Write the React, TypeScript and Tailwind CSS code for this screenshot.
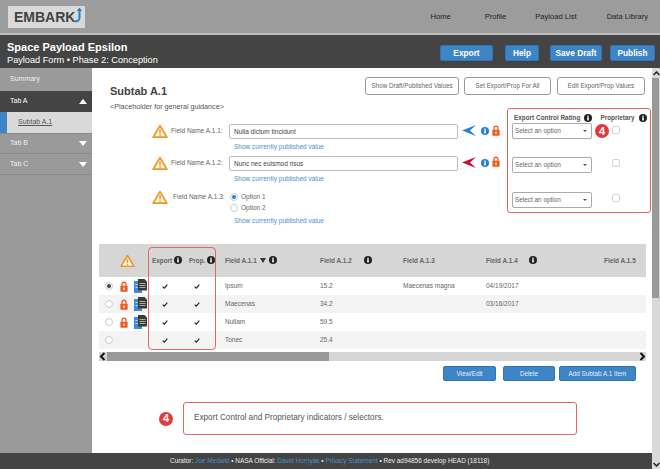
import React from "react";

const Warn = ({ size = 16 }: { size?: number }) => (
  <svg width={size} height={size * 0.9} viewBox="0 0 20 18" className="shrink-0">
    <path d="M10 2 L18.5 16.5 H1.5 Z" fill="#fff" stroke="#f7941d" strokeWidth="2.2" strokeLinejoin="round" />
    <rect x="9.1" y="6.5" width="1.9" height="5.5" fill="#f7941d" />
    <rect x="9.1" y="13" width="1.9" height="1.9" fill="#f7941d" />
  </svg>
);
const Info = ({ color = "#222", size = 8 }: { color?: string; size?: number }) => (
  <svg width={size} height={size} viewBox="0 0 10 10" className="shrink-0">
    <circle cx="5" cy="5" r="5" fill={color} />
    <rect x="4" y="2" width="2" height="1.4" fill="#fff" />
    <rect x="4" y="4" width="2" height="4" fill="#fff" />
  </svg>
);
const Lock = ({ w = 8, h = 11 }: { w?: number; h?: number }) => (
  <svg width={w} height={h} viewBox="0 0 10 13" className="shrink-0">
    <path d="M2.5 6 V3.7 a2.5 2.5 0 0 1 5 0 V6" fill="none" stroke="#f4581c" strokeWidth="1.6" />
    <rect x="0.5" y="5.5" width="9" height="7.5" rx="0.7" fill="#f4581c" />
    <rect x="4.2" y="7.8" width="1.6" height="3" fill="#fff" />
  </svg>
);
const Doc = () => (
  <svg width="13" height="14" viewBox="0 0 13 14" className="shrink-0">
    <rect x="0" y="2" width="8" height="12" fill="#3b8ade" />
    <rect x="1.5" y="5" width="2" height="1" fill="#cfe3f7" />
    <rect x="1.5" y="8" width="2" height="1" fill="#cfe3f7" />
    <path d="M4 0 H10.5 L13 2.5 V11.5 H4 Z" fill="#3a3a3a" />
    <rect x="5.5" y="4" width="6" height="1" fill="#aaa" />
    <rect x="5.5" y="6" width="6" height="1" fill="#aaa" />
    <rect x="5.5" y="8" width="6" height="1" fill="#aaa" />
  </svg>
);
const Arrow = ({ color }: { color: string }) => (
  <svg width="14" height="11" viewBox="0 0 14 11" className="shrink-0">
    <path d="M0 5.5 L14 0 L8 5.5 L14 11 Z" fill={color} />
  </svg>
);
const Badge = () => (
  <div className="flex h-[14px] w-[14px] shrink-0 items-center justify-center rounded-full bg-[#e03a3e] text-[11px] font-bold leading-none text-white">
    4
  </div>
);
const Check = () => (
  <svg width="6" height="5" viewBox="0 0 7 6">
    <path d="M0.7 3.2 L2.6 5 L6.3 0.8" fill="none" stroke="#222" strokeWidth="1.4" />
  </svg>
);
const Chev = ({ d }: { d: string }) => (
  <svg width="7" height="9" viewBox="0 0 7 9" className="shrink-0">
    <path d={d} fill="none" stroke="#111" strokeWidth="2" />
  </svg>
);
const Select = () => (
  <div className="flex h-[16px] w-[80px] items-center justify-between rounded-[2px] border border-[#aaa] bg-white pl-[2px] pr-[4px] text-[6.4px] text-[#666]">
    <span className="whitespace-nowrap">Select an option</span>
    <span className="h-0 w-0 border-x-[2px] border-t-[2px] border-x-transparent border-t-[#555]" />
  </div>
);
const Box = () => <div className="h-[8px] w-[8px] rounded-[2px] border border-[#d4d4d4] bg-white" />;
const PubLink = () => (
  <div className="whitespace-nowrap text-[6.5px] leading-[10px] text-[#4a90d6]">Show currently published value</div>
);
const TopBtn = ({ label, cls }: { label: string; cls: string }) => (
  <div className={`flex h-[16px] items-center justify-center rounded-[2px] border border-[#2f75b5] bg-[#3d85c6] text-[8.3px] font-bold text-white ${cls}`}>
    {label}
  </div>
);
const OutBtn = ({ label, cls }: { label: string; cls: string }) => (
  <div className={`flex h-[18px] items-center justify-center whitespace-nowrap rounded-[3px] border border-[#999] bg-white text-[6.3px] text-[#666] ${cls}`}>
    {label}
  </div>
);
const ActBtn = ({ label, cls }: { label: string; cls: string }) => (
  <div className={`flex h-[15px] items-center justify-center whitespace-nowrap rounded-[2px] border border-[#2f75b5] bg-[#3d85c6] text-[6.3px] text-[#e6eff8] ${cls}`}>
    {label}
  </div>
);
const Field = ({ label, value, color, lockUp }: { label: string; value: string; color: string; lockUp?: boolean }) => (
  <div className="flex h-[32px] items-start pl-[60px]">
    <Warn />
    <div className="ml-[3px] w-[58px] whitespace-nowrap pt-[2px] text-[6.5px] leading-[10px] text-[#666]">{label}</div>
    <div>
      <div className="flex h-[15px] w-[229px] items-center rounded-[2px] border border-[#bbb] bg-white pl-[4px] text-[6.5px] text-[#444]">
        {value}
      </div>
      <div className="mt-[3px] pl-[5px]">
        <PubLink />
      </div>
    </div>
    <div className="ml-[4px] flex items-center pt-[1px]">
      <Arrow color={color} />
      <div className="ml-[5px]"><Info color="#2a7fd6" /></div>
      <div className={`ml-[3px] ${lockUp ? "-mt-[2px]" : ""}`}><Lock /></div>
    </div>
  </div>
);

const GRID = "grid grid-cols-[17px_16px_16px_33px_32px_107px_83px_83px_118px_42px] items-center";
const rows = [
  { on: true, lock: true, bg: "bg-white", a: "Ipsum", b: "15.2", c: "Maecenas magna", d: "04/19/2017" },
  { on: false, lock: true, bg: "bg-[#f3f3f3]", a: "Maecenas", b: "34.2", c: "", d: "03/16/2017" },
  { on: false, lock: true, bg: "bg-white", a: "Nullam", b: "59.5", c: "", d: "" },
  { on: false, lock: false, bg: "bg-[#f3f3f3]", a: "Tonec", b: "25.4", c: "", d: "" },
];
const Radio = ({ on }: { on: boolean }) => (
  <div className="flex h-[8px] w-[8px] items-center justify-center rounded-full border border-[#ccc] bg-white">
    {on && <div className="h-[4px] w-[4px] rounded-full bg-[#444]" />}
  </div>
);

export default function App() {
  return (
    <div className="flex h-[469px] w-[660px] flex-col overflow-hidden bg-white font-['Liberation_Sans',Arial,sans-serif]">
      {/* top nav */}
      <div className="flex h-[35px] shrink-0 items-center justify-between border-b-2 border-[#bdbdbd] bg-[#9c9c9c] pl-[8px]">
        <div className="flex h-[22px] w-[77px] items-center bg-[#d9d9d9] pl-[6px] text-[14px] font-bold leading-none text-[#444]">
          EMBARK
          <svg width="8" height="16" viewBox="0 0 8 16" className="-ml-[1px] -mt-[3px] shrink-0">
            <path d="M5.5 3 V11 a3.5 3.5 0 0 1 -5 3" fill="none" stroke="#2a7fc0" strokeWidth="2" />
            <path d="M2.8 4 L5.5 0.5 L8 4 Z" fill="#2a7fc0" />
          </svg>
        </div>
        <div className="flex whitespace-nowrap pt-[1px] text-[7.6px] text-[#222]">
          <span>Home</span>
          <span className="ml-[34px]">Profile</span>
          <span className="ml-[29px]">Payload List</span>
          <span className="ml-[30px] mr-[12px]">Data Library</span>
        </div>
      </div>
      {/* title bar */}
      <div className="flex h-[33px] shrink-0 items-center justify-between bg-[#444] pl-[7px] pr-[5px] text-white">
        <div className="pt-[3px]">
          <div className="text-[11px] font-bold leading-[13px]">Space Payload Epsilon</div>
          <div className="text-[9.2px] leading-[12px]">Payload Form • Phase 2: Conception</div>
        </div>
        <div className="flex items-center pt-[3px]">
          <TopBtn label="Export" cls="w-[53px]" />
          <TopBtn label="Help" cls="ml-[12px] w-[34px]" />
          <TopBtn label="Save Draft" cls="ml-[11px] w-[52px]" />
          <TopBtn label="Publish" cls="ml-[8px] w-[45px]" />
        </div>
      </div>
      {/* body */}
      <div className="flex min-h-0 flex-1">
        <div className="flex min-w-0 flex-1 flex-col">
          <div className="flex min-h-0 flex-1">
            {/* sidebar */}
            <div className="w-[92px] shrink-0 bg-[#9a9a9a] text-[7px] text-[#eee]">
              <div className="flex h-[23px] items-center pl-[10px]">Summary</div>
              <div className="flex h-[21px] items-center justify-between bg-[#444] pl-[10px] pr-[5px] text-white">
                Tab A
                <span className="h-0 w-0 border-x-[4px] border-b-[5px] border-x-transparent border-b-white" />
              </div>
              <div className="flex h-[21px] items-center border-l-[7px] border-[#3d85c6] bg-[#d9d9d9] pl-[11px] text-[#555] underline">
                Subtab A.1
              </div>
              <div className="flex h-[21px] items-center justify-between border-y border-[#8a8a8a] pl-[10px] pr-[5px]">
                Tab B
                <span className="h-0 w-0 border-x-[4px] border-t-[5px] border-x-transparent border-t-white" />
              </div>
              <div className="flex h-[21px] items-center justify-between border-b border-[#8a8a8a] pl-[10px] pr-[5px]">
                Tab C
                <span className="h-0 w-0 border-x-[4px] border-t-[5px] border-x-transparent border-t-white" />
              </div>
            </div>
            {/* main */}
            <div className="relative min-w-0 flex-1 pt-[9px]">
              <div className="flex h-[31px] justify-between pr-[7px]">
                <div className="pl-[18px] pt-[6px]">
                  <div className="text-[11px] font-bold leading-[16px] text-[#444]">Subtab A.1</div>
                  <div className="mt-[2px] whitespace-nowrap text-[7.2px] leading-[12px] text-[#555]">&lt;Placeholder for general guidance&gt;</div>
                </div>
                <div className="flex">
                  <OutBtn label="Show Draft/Published Values" cls="w-[94px]" />
                  <OutBtn label="Set Export/Prop For All" cls="ml-[5px] w-[87px]" />
                  <OutBtn label="Edit Export/Prop Values" cls="ml-[6px] w-[88px]" />
                </div>
              </div>
              {/* form */}
              <div className="flex h-[105px]">
                <div className="w-[420px] shrink-0 pt-[16px]">
                  <Field label="Field Name A.1.1:" value="Nulla dictum tincidunt" color="#2a7fd6" />
                  <Field label="Field Name A.1.2:" value="Nunc nec euismod risus" color="#c8102e" lockUp />
                  <div className="flex pl-[60px] pt-[2px]">
                    <Warn />
                    <div className="ml-[5px] w-[56px] whitespace-nowrap pt-[2px] text-[6.5px] leading-[10px] text-[#666]">Field Name A.1.3:</div>
                    <div className="pt-[1px]">
                      <div className="flex h-[11px] items-center pl-[1px] text-[6.5px] text-[#666]">
                        <div className="flex h-[8px] w-[8px] items-center justify-center rounded-full border border-[#ccc]">
                          <div className="h-[4px] w-[4px] rounded-full bg-[#2a7fd6]" />
                        </div>
                        <span className="ml-[3px]">Option 1</span>
                      </div>
                      <div className="flex h-[11px] items-center pl-[1px] text-[6.5px] text-[#666]">
                        <div className="h-[8px] w-[8px] rounded-full border border-[#ccc]" />
                        <span className="ml-[3px]">Option 2</span>
                      </div>
                      <div className="mt-[3px] pl-[5px]"><PubLink /></div>
                    </div>
                  </div>
                </div>
                <div className="flex-1 pt-[4px]">
                  <div className="flex h-[11px] items-center whitespace-nowrap text-[6.4px] font-bold text-[#555]">
                    <span className="ml-[2px]">Export Control Rating</span>
                    <span className="ml-[4px]"><Info /></span>
                    <span className="ml-[8px]">Proprietary</span>
                    <span className="ml-[4px]"><Info /></span>
                  </div>
                  <div className="flex h-[34px] items-start">
                    <Select />
                    <div className="ml-[20px] mt-[3px]"><Box /></div>
                  </div>
                  <div className="flex h-[35px] items-start">
                    <Select />
                    <div className="ml-[20px] mt-[2px]"><Box /></div>
                  </div>
                  <div className="flex items-start">
                    <Select />
                    <div className="ml-[20px] mt-[2px]"><Box /></div>
                  </div>
                </div>
              </div>
              {/* table */}
              <div className="ml-[7px] mt-[31px] w-[547px]">
                <div className={`${GRID} h-[33px] bg-[#d6d6d6] text-[6.4px] font-bold text-[#666]`}>
                  <div />
                  <div className="col-span-2 flex justify-center pr-[10px]"><Warn size={15} /></div>
                  <div className="flex items-center gap-[2px] whitespace-nowrap pl-[4px]">Export<Info /></div>
                  <div className="flex items-center gap-[2px] whitespace-nowrap pl-[8px]">Prop.<Info /></div>
                  <div className="flex items-center gap-[3px] whitespace-nowrap pl-[12px]">
                    Field A.1.1
                    <span className="h-0 w-0 border-x-[3px] border-t-[5px] border-x-transparent border-t-[#333]" />
                    <Info />
                  </div>
                  <div className="flex items-center gap-[12px] whitespace-nowrap">Field A.1.2<Info /></div>
                  <div className="whitespace-nowrap">Field A.1.3</div>
                  <div className="flex items-center gap-[11px] whitespace-nowrap">Field A.1.4<Info /></div>
                  <div className="whitespace-nowrap">Field A.1.5</div>
                </div>
                {rows.map((r) => (
                  <div key={r.a} className={`${GRID} h-[18px] ${r.bg} text-[6.5px] text-[#666]`}>
                    <div className="flex justify-center pl-[2px]"><Radio on={r.on} /></div>
                    <div className="flex justify-center">{r.lock && <Lock />}</div>
                    <div className="flex justify-center">{r.lock && <Doc />}</div>
                    <div className="flex justify-center"><Check /></div>
                    <div className="flex justify-center"><Check /></div>
                    <div className="pl-[12px]">{r.a}</div>
                    <div>{r.b}</div>
                    <div>{r.c}</div>
                    <div>{r.d}</div>
                    <div />
                  </div>
                ))}
                <div className="mt-[3px] flex h-[9px] items-center bg-[#d6d6d6]">
                  <Chev d="M5.5 1 L2 4.5 L5.5 8" />
                  <div className="ml-[1px] h-[9px] w-[222px] bg-[#999]" />
                  <div className="ml-auto"><Chev d="M1.5 1 L5 4.5 L1.5 8" /></div>
                </div>
              </div>
              <div className="mt-[5px] flex justify-end pr-[16px]">
                <ActBtn label="View/Edit" cls="w-[53px]" />
                <ActBtn label="Delete" cls="ml-[7px] w-[52px]" />
                <ActBtn label="Add Subtab A.1 Item" cls="ml-[4px] w-[77px]" />
              </div>
              {/* note */}
              <div className="ml-[67px] mt-[21px] flex items-center">
                <Badge />
                <div className="ml-[10px] flex h-[33px] w-[394px] items-center rounded-[3px] border border-[#e0666a] pl-[10px] text-[8.2px] text-[#555]">
                  Export Control and Proprietary indicators / selectors.
                </div>
              </div>
              {/* annotations */}
              <div className="pointer-events-none absolute left-[415px] top-[40px] h-[105px] w-[144px] rounded-[3px] border border-[#e0666a]" />
              <div className="absolute left-[503px] top-[56px]"><Badge /></div>
              <div className="pointer-events-none absolute left-[56px] top-[179px] h-[103px] w-[68px] rounded-[4px] border border-[#e0666a]" />
            </div>
          </div>
          {/* footer */}
          <div className="flex h-[16px] shrink-0 items-center whitespace-nowrap bg-[#444] pl-[170px] text-[6.45px] text-[#eee]">
            Curator:&nbsp;<span className="text-[#4a90c6]">Joe Medwid</span>&nbsp;•&nbsp;NASA Official:&nbsp;
            <span className="text-[#4a90c6]">David Hornyak</span>&nbsp;•&nbsp;
            <span className="text-[#4a90c6]">Privacy Statement</span>&nbsp;•&nbsp;Rev ad94856 develop HEAD (18118)
          </div>
        </div>
        {/* scrollbar */}
        <div className="flex w-[8px] shrink-0 flex-col bg-[#d9d9d9]">
          <div className="flex h-[10px] items-center justify-center">
            <svg width="7" height="5" viewBox="0 0 7 5"><path d="M0.5 4 L3.5 1 L6.5 4" fill="none" stroke="#222" strokeWidth="1.5" /></svg>
          </div>
          <div className="h-[220px] w-[7px] bg-[#999]" />
          <div className="mt-auto flex h-[10px] items-center justify-center">
            <svg width="7" height="5" viewBox="0 0 7 5"><path d="M0.5 1 L3.5 4 L6.5 1" fill="none" stroke="#222" strokeWidth="1.5" /></svg>
          </div>
        </div>
      </div>
    </div>
  );
}
